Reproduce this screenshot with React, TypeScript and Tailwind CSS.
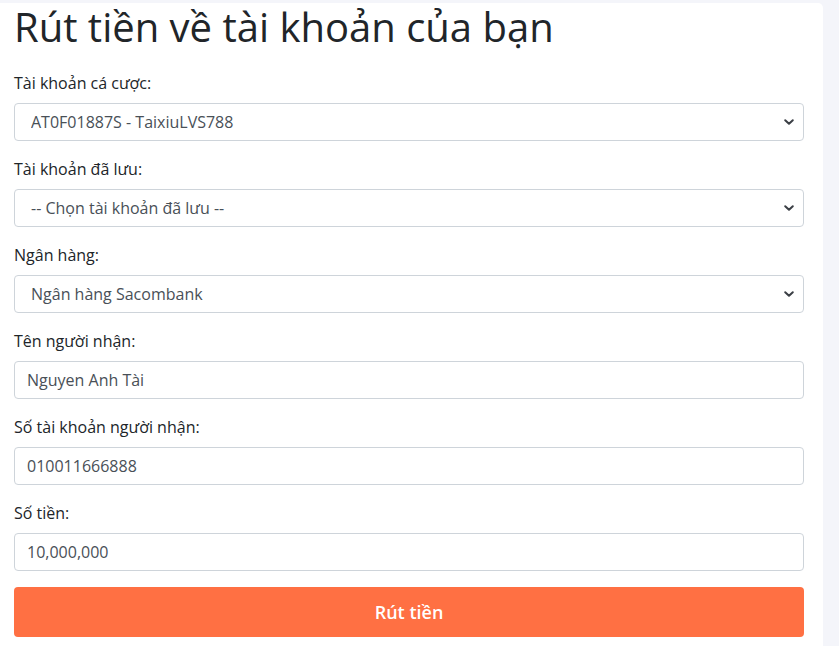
import React from "react";

const Chevron = () => (
  <svg
    className="pointer-events-none absolute right-[9px] top-1/2 -translate-y-1/2"
    width="12"
    height="12"
    viewBox="0 0 12 12"
  >
    <path d="M2.2 4.2 L6 7.8 L9.8 4.2" fill="none" stroke="#3b3f45" strokeWidth="2" strokeLinecap="round" strokeLinejoin="round" />
  </svg>
);

const SelectField = ({ label, value }: { label: string; value: string }) => (
  <div className="mb-4">
    <label className="mb-2 block text-[16px] leading-6 text-[#212529]">{label}</label>
    <div className="relative">
      <select
        className="block h-[38px] w-full appearance-none rounded-[4px] border border-[#ced4da] bg-white pl-[16px] pr-8 text-[16px] text-[#495057] outline-none"
        defaultValue={value}
      >
        <option value={value}>{value}</option>
      </select>
      <Chevron />
    </div>
  </div>
);

const InputField = ({ label, value }: { label: string; value: string }) => (
  <div className="mb-4">
    <label className="mb-2 block text-[16px] leading-6 text-[#212529]">{label}</label>
    <input
      className="block h-[38px] w-full rounded-[4px] border border-[#ced4da] bg-white px-3 text-[16px] text-[#495057] outline-none"
      defaultValue={value}
    />
  </div>
);

export default function App() {
  return (
    <div
      className="min-h-[646px] w-[839px] bg-[#f4f5fa] pt-[3px]"
      style={{ fontFamily: '"Open Sans", "Noto Sans", sans-serif' }}
    >
      <div className="h-[643px] w-[823px] rounded-tr-[5px] bg-white pl-[14px] pr-[19px]">
        <h1 className="mb-5 text-[40px] font-normal leading-[48px] text-[#212529]">
          Rút tiền về tài khoản của bạn
        </h1>
        <SelectField label="Tài khoản cá cược:" value="AT0F01887S - TaixiuLVS788" />
        <SelectField label="Tài khoản đã lưu:" value="-- Chọn tài khoản đã lưu --" />
        <SelectField label="Ngân hàng:" value="Ngân hàng Sacombank" />
        <InputField label="Tên người nhận:" value="Nguyen Anh Tài" />
        <InputField label="Số tài khoản người nhận:" value="010011666888" />
        <InputField label="Số tiền:" value="10,000,000" />
        <button className="block h-[50px] w-full rounded-[4px] bg-[#ff7043] text-[18px] font-semibold text-white">
          Rút tiền
        </button>
      </div>
    </div>
  );
}
